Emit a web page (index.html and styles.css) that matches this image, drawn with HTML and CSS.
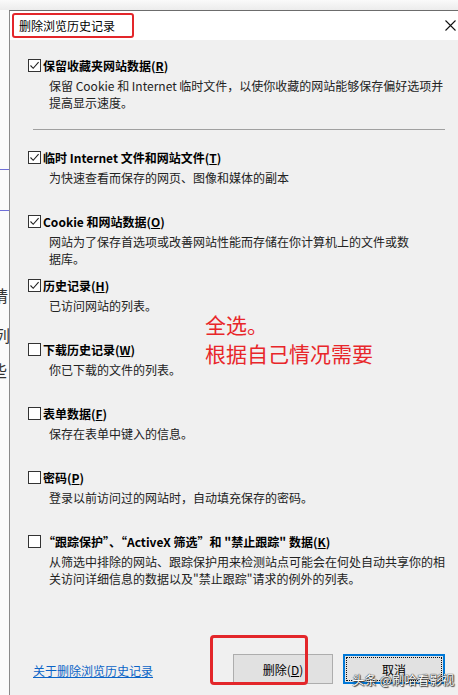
FILE: index.html
```html
<!DOCTYPE html>
<html lang="zh-CN">
<head>
<meta charset="utf-8">
<title>删除浏览历史记录</title>
<link rel="stylesheet" href="styles.css">
</head>
<body>
<div class="screen">
  <div class="top-strip"></div>
  <div class="main">
    <div class="backdrop">
      <span class="bd-line bd-line-1"></span>
      <span class="bd-line bd-line-2"></span>
      <span class="bd-char bd-c1">请</span>
      <span class="bd-char bd-c2">列</span>
      <span class="bd-char bd-c3">些</span>
    </div>
    <div class="window">
      <div class="titlebar">
        <div class="title-box"><span class="title">删除浏览历史记录</span></div>
        <svg class="close" width="11" height="11" viewBox="0 0 11 11"><path d="M0.5 0.5 L10.5 10.5 M10.5 0.5 L0.5 10.5" stroke="#111" stroke-width="1.1" fill="none"/></svg>
      </div>
      <div class="content">
        <div class="item">
          <div class="item-head"><span class="cb"><svg width="11" height="11" viewBox="0 0 11 11"><path d="M1.5 5.5 L4.2 8.3 L9.6 2.2" stroke="#222" stroke-width="1.1" fill="none"/></svg></span><span class="item-label">保留收藏夹网站数据(<u>R</u>)</span></div>
          <div class="item-desc">保留 Cookie 和 Internet 临时文件，以使你收藏的网站能够保存偏好选项并<br>提高显示速度。</div>
        </div>
        <div class="sep"></div>
        <div class="item">
          <div class="item-head"><span class="cb"><svg width="11" height="11" viewBox="0 0 11 11"><path d="M1.5 5.5 L4.2 8.3 L9.6 2.2" stroke="#222" stroke-width="1.1" fill="none"/></svg></span><span class="item-label">临时 Internet 文件和网站文件(<u>T</u>)</span></div>
          <div class="item-desc">为快速查看而保存的网页、图像和媒体的副本</div>
        </div>
        <div class="item">
          <div class="item-head"><span class="cb"><svg width="11" height="11" viewBox="0 0 11 11"><path d="M1.5 5.5 L4.2 8.3 L9.6 2.2" stroke="#222" stroke-width="1.1" fill="none"/></svg></span><span class="item-label">Cookie 和网站数据(<u>O</u>)</span></div>
          <div class="item-desc">网站为了保存首选项或改善网站性能而存储在你计算机上的文件或数<br>据库。</div>
        </div>
        <div class="item">
          <div class="item-head"><span class="cb"><svg width="11" height="11" viewBox="0 0 11 11"><path d="M1.5 5.5 L4.2 8.3 L9.6 2.2" stroke="#222" stroke-width="1.1" fill="none"/></svg></span><span class="item-label">历史记录(<u>H</u>)</span></div>
          <div class="item-desc">已访问网站的列表。</div>
        </div>
        <div class="item">
          <div class="item-head"><span class="cb"></span><span class="item-label">下载历史记录(<u>W</u>)</span></div>
          <div class="item-desc">你已下载的文件的列表。</div>
        </div>
        <div class="item">
          <div class="item-head"><span class="cb"></span><span class="item-label">表单数据(<u>F</u>)</span></div>
          <div class="item-desc">保存在表单中键入的信息。</div>
        </div>
        <div class="item">
          <div class="item-head"><span class="cb"></span><span class="item-label">密码(<u>P</u>)</span></div>
          <div class="item-desc">登录以前访问过的网站时，自动填充保存的密码。</div>
        </div>
        <div class="item">
          <div class="item-head"><span class="cb"></span><span class="item-label">“跟踪保护”、“ActiveX 筛选”和 "禁止跟踪" 数据(<u>K</u>)</span></div>
          <div class="item-desc">从筛选中排除的网站、跟踪保护用来检测站点可能会在何处自动共享你的相<br>关访问详细信息的数据以及"禁止跟踪"请求的例外的列表。</div>
        </div>
        <div class="note">全选。<br>根据自己情况需要</div>
      </div>
      <div class="footer">
        <a class="help-link" href="#">关于删除浏览历史记录</a>
        <button class="btn btn-delete" type="button">删除(<u>D</u>)</button>
        <button class="btn btn-cancel" type="button"><span class="focus-ring">取消</span></button>
        <div class="mark-box"></div>
      </div>
    </div>
  </div>
  <div class="watermark">头条 @刷哈看影视</div>
</div>
</body>
</html>
```

FILE: styles.css
```css
* { box-sizing: border-box; }

html, body {
  margin: 0;
  padding: 0;
}

body {
  font-family: "Noto Sans CJK SC", "Noto Sans", sans-serif;
  font-size: 12px;
  color: #111;
  background: #f6f6f6;
}

.screen {
  position: relative;
  width: 458px;
  height: 695px;
  overflow: hidden;
  display: flex;
  flex-direction: column;
  background: #f7f7f7;
}

.top-strip {
  height: 10px;
  flex: none;
  background: linear-gradient(#fafafa, #ececec);
}

.main {
  flex: 1;
  display: flex;
  min-height: 0;
}

.backdrop {
  width: 9px;
  flex: none;
  overflow: hidden;
  background: #fbfbfb;
  display: flex;
  flex-direction: column;
}

.bd-line {
  display: block;
  height: 1px;
  background: #6f6fd8;
}

.bd-line-1 { margin-top: 159px; }
.bd-line-2 { margin-top: 40px; }

.bd-char {
  display: block;
  font-size: 16px;
  line-height: 16px;
  color: #333;
  white-space: nowrap;
}

.bd-c1 { margin-top: 76px; margin-left: -8px; }
.bd-c2 { margin-top: 24px; margin-left: -6px; }
.bd-c3 { margin-top: 19px; margin-left: -9px; }

.window {
  flex: 1;
  display: flex;
  flex-direction: column;
  border-left: 1px solid #8a8a8a;
  border-top: 1px solid #6c6c6c;
  background: #f0f0f0;
}

.titlebar {
  height: 29px;
  flex: none;
  background: #fff;
  display: flex;
  align-items: flex-start;
  justify-content: space-between;
  padding-right: 7px;
}

.title-box {
  margin: 2px 0 0 2px;
  width: 122px;
  height: 25px;
  border: 2px solid #e3262a;
  border-radius: 3px;
  padding-left: 5px;
  display: flex;
  align-items: center;
}

.title {
  font-size: 12px;
  line-height: 14px;
  color: #000;
}

.close {
  margin-top: 9px;
}

.content {
  position: relative;
  flex: 1;
  padding: 17px 18px 0 18px;
}

.item {
  height: 64px;
}

.item-head {
  display: flex;
  align-items: center;
  gap: 2px;
  height: 17px;
  line-height: 17px;
}

.cb {
  width: 13px;
  height: 13px;
  flex: none;
  border: 1px solid #333;
  background: #fff;
  display: flex;
  align-items: center;
  justify-content: center;
}

.item-label {
  font-weight: 700;
  color: #000;
  white-space: nowrap;
}

.item-desc {
  margin-top: 3px;
  padding-left: 21px;
  line-height: 17px;
  color: #222;
  white-space: nowrap;
}

.sep {
  height: 1px;
  background: #a0a0a0;
  margin: 8px 0 19px 5px;
}

.note {
  position: absolute;
  left: 195px;
  top: 270px;
  font-size: 21px;
  line-height: 29px;
  color: #e8262a;
  white-space: nowrap;
}

.footer {
  position: relative;
  flex: none;
  display: flex;
  align-items: center;
  gap: 10px;
  padding: 0 18px 11px 23px;
}

.help-link {
  margin-right: auto;
  margin-top: 3px;
  color: #0b64c6;
  text-decoration: underline;
  font-size: 12px;
}

.btn {
  font-family: inherit;
  font-size: 12px;
  color: #000;
  height: 30px;
  padding: 0;
  margin: 0;
}

.btn-delete {
  width: 100px;
  background: #e1e1e1;
  border: 1px solid #adadad;
}

.btn-cancel {
  width: 102px;
  border: 2px solid #0078d7;
  padding: 1px;
  background-color: #e1e1e1;
}

.focus-ring {
  display: flex;
  align-items: center;
  justify-content: center;
  width: 100%;
  height: 100%;
  border: 1px dotted #111;
}

.mark-box {
  position: absolute;
  left: 200px;
  top: -19px;
  width: 98px;
  height: 50px;
  border: 3px solid #e3262a;
  border-radius: 4px;
}

.watermark {
  position: absolute;
  left: 352px;
  top: 672px;
  font-size: 12.5px;
  line-height: 16px;
  color: #fff;
  white-space: nowrap;
  text-shadow: 0 0 1px #222, 0 0 1px #222, 1px 1px 1px #333;
}
```
